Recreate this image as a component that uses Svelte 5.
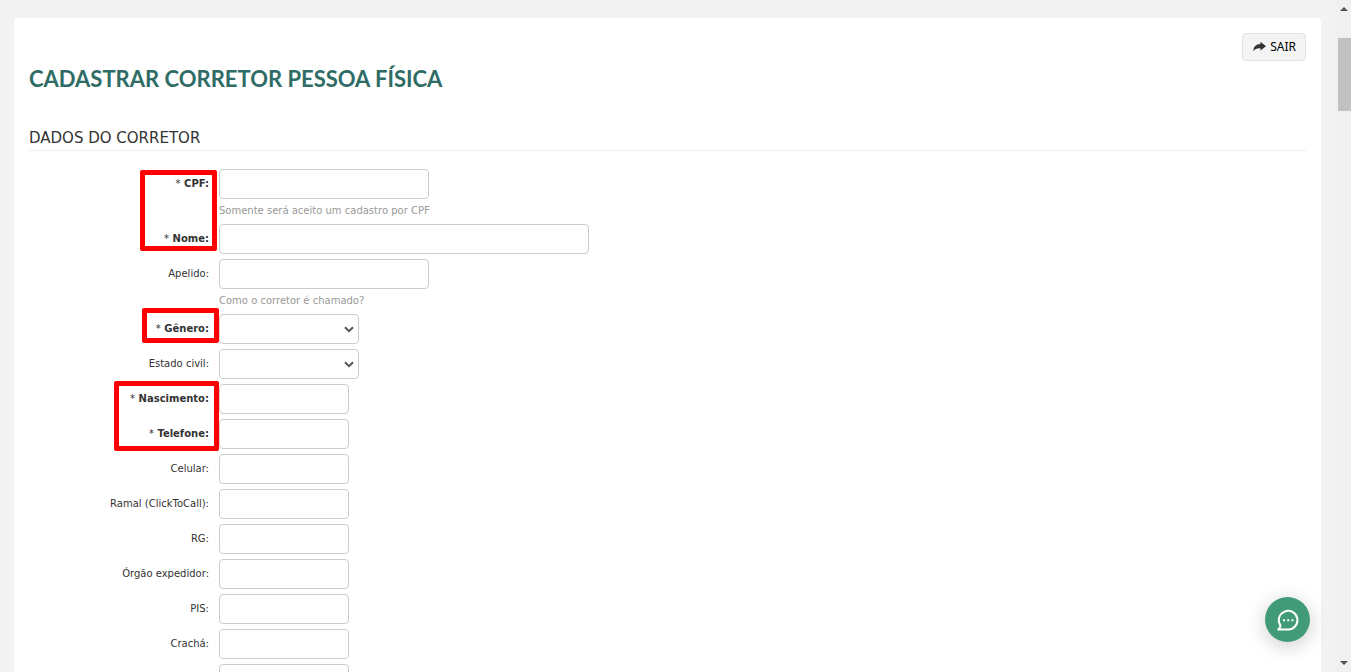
<script lang="ts">
	type Field = {
		id: string;
		label: string;
		size: string;
		required?: boolean;
		select?: boolean;
		help?: string;
	};

	const fields: Field[] = [
		{ id: 'cpf', label: 'CPF:', size: 'medium', required: true, help: 'Somente será aceito um cadastro por CPF' },
		{ id: 'nome', label: 'Nome:', size: 'large', required: true },
		{ id: 'apelido', label: 'Apelido:', size: 'medium', help: 'Como o corretor é chamado?' },
		{ id: 'genero', label: 'Gênero:', size: 'choice', required: true, select: true },
		{ id: 'estado-civil', label: 'Estado civil:', size: 'choice', select: true },
		{ id: 'nascimento', label: 'Nascimento:', size: 'small', required: true },
		{ id: 'telefone', label: 'Telefone:', size: 'small', required: true },
		{ id: 'celular', label: 'Celular:', size: 'small' },
		{ id: 'ramal', label: 'Ramal (ClickToCall):', size: 'small' },
		{ id: 'rg', label: 'RG:', size: 'small' },
		{ id: 'orgao', label: 'Órgão expedidor:', size: 'small' },
		{ id: 'pis', label: 'PIS:', size: 'small' },
		{ id: 'cracha', label: 'Crachá:', size: 'small' },
		{ id: 'creci', label: '', size: 'small' }
	];

	let values: Record<string, string> = $state({});
</script>

<div class="page">
	<main class="card">
		<header>
			<button class="exit" type="button">
				<svg width="13" height="12" viewBox="0 0 13 12" aria-hidden="true">
					<path d="M7.5 0.8 L13 5.2 L7.5 9.6 V7.3 C4.2 7 2.2 7.8 0.4 10.2 C0.3 6 3 3.2 7.5 3.1 Z" fill="#333" />
				</svg>
				SAIR
			</button>
			<h1>CADASTRAR CORRETOR PESSOA FÍSICA</h1>
		</header>

		<h2>DADOS DO CORRETOR</h2>

		<form>
			{#each fields as field}
				<div class="row">
					<label for={field.id} class:required={field.required}>
						{#if field.required}<span>*</span>{/if}
						{field.label}
					</label>
					<div class="control">
						{#if field.select}
							<div class="select {field.size}">
								<select id={field.id} bind:value={values[field.id]}>
									<option value=""></option>
								</select>
								<svg width="10" height="7" viewBox="0 0 10 7" aria-hidden="true">
									<path d="M1 1.2 L5 5.2 L9 1.2" fill="none" stroke="#555" stroke-width="2" />
								</svg>
							</div>
						{:else}
							<input id={field.id} class={field.size} type="text" bind:value={values[field.id]} />
						{/if}
						{#if field.help}
							<p>{field.help}</p>
						{/if}
					</div>
				</div>
			{/each}

			<div class="mark mark-name"></div>
			<div class="mark mark-gender"></div>
			<div class="mark mark-contact"></div>
		</form>
	</main>

	<div class="scrollbar" aria-hidden="true">
		<svg width="8" height="4" viewBox="0 0 8 4"><path d="M0 4 L4 0 L8 4 Z" fill="#505050" /></svg>
		<div class="track"><div class="thumb"></div></div>
		<svg width="8" height="4" viewBox="0 0 8 4"><path d="M0 0 L4 4 L8 0 Z" fill="#505050" /></svg>
	</div>

	<button class="chat" type="button" aria-label="Chat">
		<svg width="22" height="22" viewBox="0 0 22 22" aria-hidden="true">
			<path d="M1.2 20.5 H11.5 A9.3 9.3 0 1 0 3.2 16.1 C3.7 17 3.2 18.8 1.2 20.5 Z" fill="none" stroke="#fff" stroke-width="2" stroke-linejoin="round" />
			<path d="M6 10.2 h2 v2 h-2 Z M10.2 10.2 h2 v2 h-2 Z M14.4 10.2 h2 v2 h-2 Z" fill="#fff" />
		</svg>
	</button>
</div>

<style>
	:global(body) {
		background: #f3f3f3;
	}

	.page {
		display: flex;
		height: 100vh;
		overflow: hidden;
		color: #333;
		font-family: Verdana, 'DejaVu Sans', sans-serif;
		font-size: 10px;
		line-height: 20px;
	}

	.card {
		flex: 1;
		height: max-content;
		margin: 18px 15px 0 14px;
		padding: 15px;
		background: #fff;
		border-radius: 4px;
	}

	header {
		display: flex;
		flex-direction: column;
	}

	.exit {
		display: flex;
		align-items: center;
		align-self: flex-end;
		gap: 4px;
		height: 28px;
		padding: 0 9px 1px 10px;
		border: 1px solid #e3e3e3;
		border-radius: 4px;
		background: #f4f4f4;
		color: #000;
		font-family: 'Noto Sans', 'Open Sans', sans-serif;
		font-size: 12px;
	}

	h1 {
		margin: 0;
		color: #2f6c66;
		font-family: Lato, sans-serif;
		font-size: 22px;
		font-weight: 700;
		line-height: 36px;
	}

	h2 {
		margin: 30px 0 18px;
		padding-bottom: 1px;
		border-bottom: 1px solid #eee;
		font-size: 15px;
		font-weight: 400;
		line-height: 22px;
	}

	form {
		position: relative;
	}

	.row {
		display: flex;
		gap: 10px;
		margin-bottom: 5px;
	}

	label {
		width: 180px;
		padding-top: 5px;
		text-align: right;
	}

	.required {
		font-weight: 700;
	}

	.required span {
		font-weight: 400;
	}

	input,
	select {
		display: block;
		box-sizing: border-box;
		width: 100%;
		height: 30px;
		padding: 4px 6px;
		border: 1px solid #ccc;
		border-radius: 4px;
		background: #fff;
		color: #555;
		font: inherit;
	}

	select {
		appearance: none;
	}

	.select {
		position: relative;
	}

	.select svg {
		position: absolute;
		top: 12px;
		right: 5px;
		pointer-events: none;
	}

	input.small {
		width: 130px;
	}

	.choice {
		width: 140px;
	}

	input.medium {
		width: 210px;
	}

	input.large {
		width: 370px;
	}

	p {
		margin: 4px 0 0;
		color: #999;
		line-height: 16px;
	}

	.mark {
		position: absolute;
		box-sizing: border-box;
		border: 5px solid #f00;
		border-radius: 2px;
		pointer-events: none;
	}

	.mark-name {
		top: 1px;
		left: 111px;
		width: 77px;
		height: 81px;
	}

	.mark-gender {
		top: 139px;
		left: 113px;
		width: 77px;
		height: 35px;
	}

	.mark-contact {
		top: 212px;
		left: 85px;
		width: 105px;
		height: 70px;
	}

	.scrollbar {
		display: flex;
		flex-direction: column;
		align-items: center;
		gap: 7px;
		box-sizing: border-box;
		width: 15px;
		padding: 7px 0;
		background: #f0f0f0;
	}

	.track {
		flex: 1;
		align-self: stretch;
		padding: 20px 0 0 2px;
	}

	.thumb {
		height: 73px;
		background: #c1c1c1;
	}

	.chat {
		position: fixed;
		right: 41px;
		bottom: 30px;
		display: flex;
		align-items: center;
		justify-content: center;
		width: 45px;
		height: 45px;
		padding: 0;
		border: 0;
		border-radius: 50%;
		background: #429b78;
		box-shadow: 0 4px 20px rgba(0, 0, 0, 0.2);
	}
</style>
